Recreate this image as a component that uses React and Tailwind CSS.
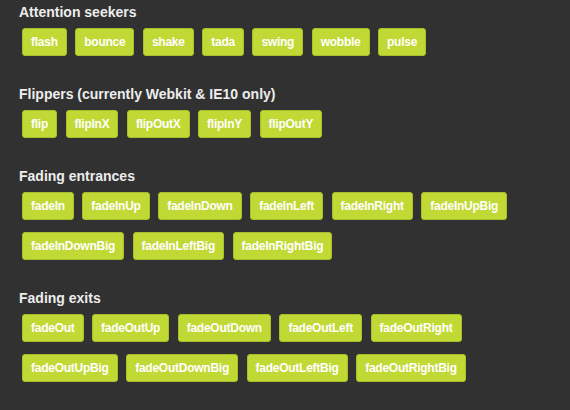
const sections = [
  {
    title: "Attention seekers",
    rows: [["flash", "bounce", "shake", "tada", "swing", "wobble", "pulse"]],
  },
  {
    title: "Flippers (currently Webkit & IE10 only)",
    rows: [["flip", "flipInX", "flipOutX", "flipInY", "flipOutY"]],
  },
  {
    title: "Fading entrances",
    rows: [
      ["fadeIn", "fadeInUp", "fadeInDown", "fadeInLeft", "fadeInRight", "fadeInUpBig"],
      ["fadeInDownBig", "fadeInLeftBig", "fadeInRightBig"],
    ],
  },
  {
    title: "Fading exits",
    rows: [
      ["fadeOut", "fadeOutUp", "fadeOutDown", "fadeOutLeft", "fadeOutRight"],
      ["fadeOutUpBig", "fadeOutDownBig", "fadeOutLeftBig", "fadeOutRightBig"],
    ],
  },
];

export default function App() {
  return (
    <div
      className="min-h-screen bg-[#313131] pt-[3px] px-[19px]"
      style={{ fontFamily: '"Liberation Sans", Arial, sans-serif' }}
    >
      {sections.map((section, i) => (
        <div key={section.title} className={i === 0 ? "" : "mt-[29px]"}>
          <h2 className="text-[14px] leading-[18px] font-bold text-[#ededed]">
            {section.title}
          </h2>
          <div className="mt-[7px] ml-[3px] flex flex-col gap-[12px]">
            {section.rows.map((row, r) => (
              <div key={r} className="flex gap-[8.5px]">
                {row.map((name) => (
                  <button
                    key={name}
                    className="h-[28px] px-[8px] rounded-[3px] border border-[#a9bf2a] bg-[#c1d934] text-white text-[12px] tracking-[-0.25px] font-bold leading-none"
                  >
                    {name}
                  </button>
                ))}
              </div>
            ))}
          </div>
        </div>
      ))}
    </div>
  );
}
